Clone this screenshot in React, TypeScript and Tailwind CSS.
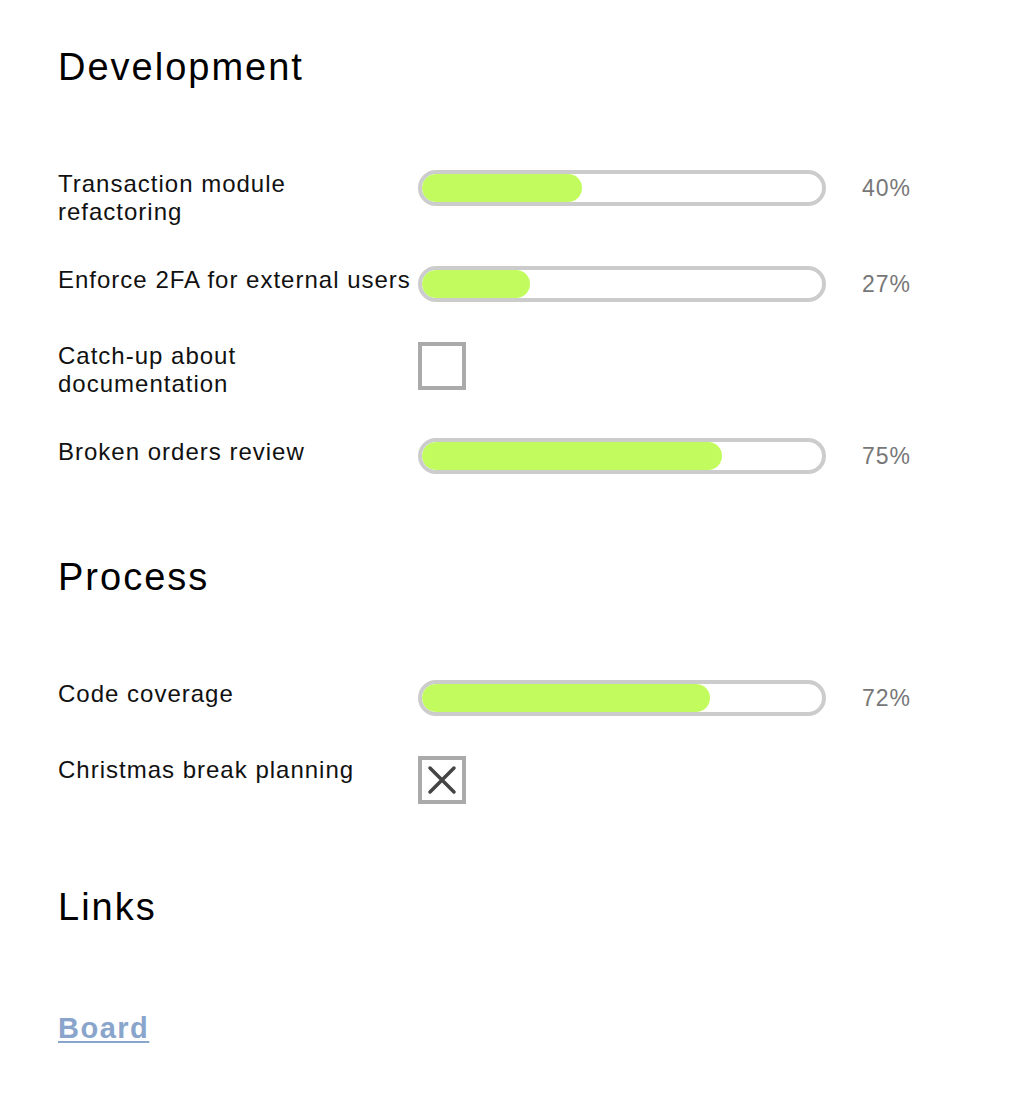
import React from "react";

type Item =
  | { kind: "bar"; label: string; pct: number }
  | { kind: "check"; label: string; checked: boolean };

const sections: { title: string; items: Item[] }[] = [
  {
    title: "Development",
    items: [
      { kind: "bar", label: "Transaction module refactoring", pct: 40 },
      { kind: "bar", label: "Enforce 2FA for external users", pct: 27 },
      { kind: "check", label: "Catch-up about documentation", checked: false },
      { kind: "bar", label: "Broken orders review", pct: 75 },
    ],
  },
  {
    title: "Process",
    items: [
      { kind: "bar", label: "Code coverage", pct: 72 },
      { kind: "check", label: "Christmas break planning", checked: true },
    ],
  },
];

function Heading({ children }: { children: React.ReactNode }) {
  return (
    <h2 className="text-[38px] leading-[44px] tracking-[2px] text-black font-normal">
      {children}
    </h2>
  );
}

function Label({ label }: { label: string }) {
  if (label === "Transaction module refactoring")
    return (
      <>
        Transaction module
        <br />
        refactoring
      </>
    );
  if (label === "Catch-up about documentation")
    return (
      <>
        Catch-up about
        <br />
        documentation
      </>
    );
  return <span className="whitespace-nowrap">{label}</span>;
}

function Row({ item }: { item: Item }) {
  return (
    <div className="flex items-start">
      <div className="w-[360px] shrink-0 text-[24px] leading-[28px] tracking-[1px] text-[#111]">
        <Label label={item.label} />
      </div>
      {item.kind === "bar" ? (
        <div className="flex items-center">
          <div className="w-[408px] h-[36px] rounded-full border-4 border-[#cccccc] bg-white overflow-hidden">
            <div
              className="h-full rounded-full bg-[#c2fb5e]"
              style={{ width: `${item.pct}%` }}
            />
          </div>
          <span className="ml-[36px] text-[23px] leading-[28px] tracking-[1px] text-[#777]">
            {item.pct}%
          </span>
        </div>
      ) : (
        <div className="w-[48px] h-[48px] border-4 border-[#aaaaaa] bg-white flex items-center justify-center">
          {item.checked && (
            <svg width="40" height="40" viewBox="0 0 40 40">
              <path
                d="M8 8 L32 32 M32 8 L8 32"
                stroke="#444"
                strokeWidth="3.5"
                strokeLinecap="round"
              />
            </svg>
          )}
        </div>
      )}
    </div>
  );
}

export default function App() {
  return (
    <div
      className="min-h-[1112px] w-[1032px] bg-white pl-[58px] pt-[45px]"
      style={{ fontFamily: '"Liberation Sans", Arial, sans-serif' }}
    >
      {sections.map((s) => (
        <section key={s.title} className="mb-[81px]">
          <Heading>{s.title}</Heading>
          <div className="mt-[81px] flex flex-col gap-[40px]">
            {s.items.map((it) => (
              <Row key={it.label} item={it} />
            ))}
          </div>
        </section>
      ))}
      <section>
        <Heading>Links</Heading>
        <div className="mt-[81px]">
          <a
            href="#"
            className="text-[29px] leading-[36px] font-bold tracking-[1.5px] text-[#8aa5cc] underline underline-offset-[3px]"
          >
            Board
          </a>
        </div>
      </section>
    </div>
  );
}
